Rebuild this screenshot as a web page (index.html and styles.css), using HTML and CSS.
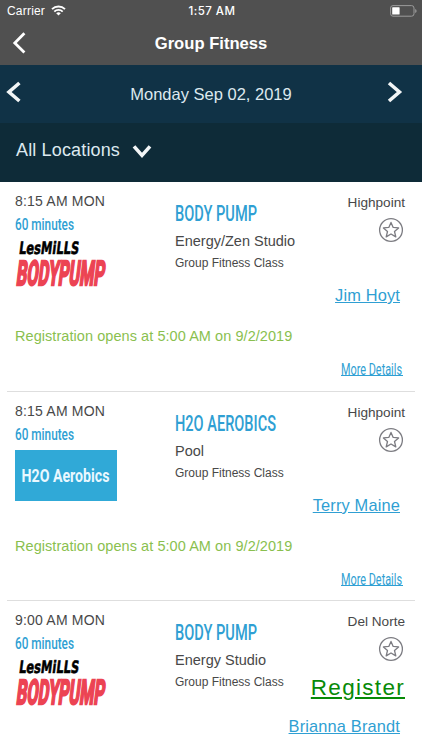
FILE: index.html
```html
<!DOCTYPE html>
<html lang="en">
<head>
    <meta charset="UTF-8">
    <meta name="viewport" content="width=device-width, initial-scale=1.0">
    <title>Group Fitness</title>
    <link rel="stylesheet" href="styles.css">
</head>
<body>
<!-- Shared star icon -->
<svg class="defs" width="0" height="0">
    <symbol id="star" viewBox="0 0 26 26">
        <circle cx="13" cy="13" r="11.4" fill="none" stroke="#7c7c82" stroke-width="1.3"/>
        <path d="M13 5.4l2.2 5 5.4.5-4.1 3.6 1.3 5.4-4.8-2.9-4.8 2.9 1.3-5.4-4.1-3.6 5.4-.5z" fill="none" stroke="#7c7c82" stroke-width="1.3" stroke-linejoin="round"/>
    </symbol>
</svg>

<header class="navbar">
    <div class="status">
        <div class="carrier">
            <span>Carrier</span>
            <svg width="15" height="11" viewBox="0 0 15 11" fill="none" stroke="#fff" stroke-width="1.9">
                <path d="M1 4.1a9.3 9.3 0 0 1 13 0M3.3 6.6a6 6 0 0 1 8.4 0"/>
                <path d="M7.5 10.6L5.2 8.3a3.3 3.3 0 0 1 4.6 0z" fill="#fff" stroke="none"/>
            </svg>
        </div>
        <span class="clock">1:57 AM</span>
        <svg class="battery" width="27" height="12" viewBox="0 0 27 12">
            <rect x=".6" y=".6" width="23.4" height="10.6" rx="2.4" fill="none" stroke="#9b9b9b"/>
            <rect x="2.2" y="2.2" width="7.4" height="7.4" rx=".6" fill="#fff"/>
            <path d="M25.2 4v4q1.4-.6 1.4-2t-1.4-2z" fill="#9b9b9b"/>
        </svg>
    </div>
    <div class="title-row">
        <svg class="back" width="14" height="22" viewBox="0 0 14 22"><path d="M12.4 1.3L2.8 11l9.6 9.6"/></svg>
        <h1>Group Fitness</h1>
    </div>
</header>

<div class="date-bar">
    <svg width="16" height="22" viewBox="0 0 16 22"><path d="M13.4 2L3 11l10.4 9"/></svg>
    <span>Monday Sep 02, 2019</span>
    <svg width="16" height="22" viewBox="0 0 16 22"><path d="M2 2l10.4 9L2 20"/></svg>
</div>

<div class="location-bar">
    <span>All Locations</span>
    <svg width="20" height="15" viewBox="0 0 20 15"><path d="M2 2.4l8 9 8-9"/></svg>
</div>

<main class="classes">
    <section class="class-item">
        <div class="when">
            <p class="time">8:15 AM MON</p>
            <svg class="narrow minutes" width="80" height="20"><text y="15" textLength="59" lengthAdjust="spacingAndGlyphs">60 minutes</text></svg>
            <svg class="logo" viewBox="0 0 102 51">
                <text class="lesmills" transform="translate(3.5 14) skewX(-7)" textLength="60" lengthAdjust="spacingAndGlyphs">LesMiLLS</text>
                <text class="pump" transform="translate(.8 45) skewX(-7)" textLength="88" lengthAdjust="spacingAndGlyphs">BODYPUMP</text>
            </svg>
        </div>
        <div class="what">
            <svg class="narrow name" width="120" height="24"><text y="19" textLength="82" lengthAdjust="spacingAndGlyphs">BODY PUMP</text></svg>
            <p class="room">Energy/Zen Studio</p>
            <p class="category">Group Fitness Class</p>
        </div>
        <div class="who">
            <p class="branch">Highpoint</p>
            <svg class="star"><use href="#star"/></svg>
            <a class="teacher" href="#">Jim Hoyt</a>
        </div>
        <p class="notice">Registration opens at 5:00 AM on 9/2/2019</p>
        <a class="details" href="#"><svg class="narrow" width="62" height="20"><text y="15" textLength="61" lengthAdjust="spacingAndGlyphs">More Details</text></svg></a>
    </section>

    <section class="class-item">
        <div class="when">
            <p class="time">8:15 AM MON</p>
            <svg class="narrow minutes" width="80" height="20"><text y="15" textLength="59" lengthAdjust="spacingAndGlyphs">60 minutes</text></svg>
            <svg class="logo h2o"><text x="6.5" y="31.5" textLength="88" lengthAdjust="spacingAndGlyphs">H2O Aerobics</text></svg>
        </div>
        <div class="what">
            <svg class="narrow name" width="120" height="24"><text y="19" textLength="101" lengthAdjust="spacingAndGlyphs">H2O AEROBICS</text></svg>
            <p class="room">Pool</p>
            <p class="category">Group Fitness Class</p>
        </div>
        <div class="who">
            <p class="branch">Highpoint</p>
            <svg class="star"><use href="#star"/></svg>
            <a class="teacher" href="#">Terry Maine</a>
        </div>
        <p class="notice">Registration opens at 5:00 AM on 9/2/2019</p>
        <a class="details" href="#"><svg class="narrow" width="62" height="20"><text y="15" textLength="61" lengthAdjust="spacingAndGlyphs">More Details</text></svg></a>
    </section>

    <section class="class-item last">
        <div class="when">
            <p class="time">9:00 AM MON</p>
            <svg class="narrow minutes" width="80" height="20"><text y="15" textLength="59" lengthAdjust="spacingAndGlyphs">60 minutes</text></svg>
            <svg class="logo" viewBox="0 0 102 51">
                <text class="lesmills" transform="translate(3.5 14) skewX(-7)" textLength="60" lengthAdjust="spacingAndGlyphs">LesMiLLS</text>
                <text class="pump" transform="translate(.8 45) skewX(-7)" textLength="88" lengthAdjust="spacingAndGlyphs">BODYPUMP</text>
            </svg>
        </div>
        <div class="what">
            <svg class="narrow name" width="120" height="24"><text y="19" textLength="82" lengthAdjust="spacingAndGlyphs">BODY PUMP</text></svg>
            <p class="room">Energy Studio</p>
            <p class="category">Group Fitness Class</p>
        </div>
        <div class="who open">
            <p class="branch">Del Norte</p>
            <svg class="star"><use href="#star"/></svg>
            <a class="register" href="#">Register</a>
            <a class="teacher" href="#">Brianna Brandt</a>
        </div>
    </section>
</main>
</body>
</html>
```
FILE: styles.css
```css
* {
    box-sizing: border-box;
}

body {
    margin: 0;
    font-family: "Liberation Sans", Arial, sans-serif;
    color: #484848;
    background-color: #fff;
}

p, h1 {
    margin: 0;
}

svg {
    display: block;
}

.defs {
    position: absolute;
}

/* Top bar */
.navbar {
    height: 65px;
    color: #fff;
    background-color: #505050;
}

.status {
    display: grid;
    grid-template-columns: 1fr auto 1fr;
    align-items: center;
    height: 22px;
    padding: 0 5px 0 7px;
    font-size: 12px;
}

.carrier {
    display: flex;
    align-items: center;
    gap: 6px;
    letter-spacing: 0.2px;
}

.carrier svg {
    margin-top: -2px;
}

.clock {
    font-family: Inter, sans-serif;
    font-weight: 500;
    font-size: 11.5px;
    letter-spacing: 0.45px;
}

.battery {
    justify-self: end;
    margin-top: -1px;
}

.title-row {
    display: grid;
    grid-template-columns: 50px 1fr 50px;
    align-items: center;
    height: 42px;
}

.title-row h1 {
    padding-top: 1px;
    font-size: 16.6px;
    font-weight: bold;
    text-align: center;
}

.back {
    margin-left: 12px;
    fill: none;
    stroke: #fff;
    stroke-width: 2.8;
}

/* Date and location */
.date-bar {
    display: grid;
    grid-template-columns: 16px 1fr 16px;
    align-items: center;
    height: 58px;
    padding: 0 19px 0 6px;
    font-size: 16.5px;
    text-align: center;
    color: #dde9ef;
    background-color: #103246;
}

.date-bar span {
    padding-left: 13px;
}

.date-bar svg {
    margin-bottom: 5px;
}

.date-bar svg,
.location-bar svg {
    fill: none;
    stroke: #f2f5f6;
    stroke-width: 3.6;
}

.location-bar {
    display: flex;
    align-items: center;
    gap: 12px;
    height: 59px;
    padding: 0 16px 4px;
    font-size: 18px;
    letter-spacing: 0.15px;
    color: #dde9ef;
    background-color: #0e2b38;
}

.location-bar svg {
    margin-top: 2px;
}

/* Class list */
.class-item {
    display: grid;
    grid-template-columns: 160px 1fr 94px;
    grid-template-rows: 144px 26px 1fr;
    height: 209.5px;
    margin: 0 7px;
    padding: 0 10px 0 8px;
    border-bottom: 1px solid #dedede;
}

.class-item.last {
    grid-template-rows: 144px;
    height: 149px;
    border-bottom: none;
}

.when {
    padding-top: 10px;
}

.time {
    font-size: 14px;
    line-height: 18px;
    letter-spacing: 0.2px;
}

.narrow {
    font-family: Roboto, sans-serif;
    font-weight: 500;
    fill: #2f9fd3;
    overflow: visible;
}

.minutes {
    margin-top: 5px;
    font-size: 16px;
}

.logo {
    width: 102px;
    height: 51px;
    margin-top: 5px;
}

.lesmills {
    font: bold 17px "DejaVu Sans", sans-serif;
    fill: #000;
    stroke: #000;
    stroke-width: 0.6px;
}

.pump {
    font: bold 34px Roboto, sans-serif;
    fill: #ec4353;
    stroke: #ec4353;
    stroke-width: 2.4px;
}

.h2o {
    background-color: #30a9d7;
    font: bold 19px Roboto, sans-serif;
    fill: #e9f8ff;
}

.what {
    padding-top: 20px;
}

.name {
    font-size: 21.5px;
}

.room {
    margin-top: 5px;
    font-size: 14.5px;
    line-height: 20px;
    white-space: nowrap;
}

.category {
    margin-top: 3px;
    font-size: 12px;
    line-height: 18px;
    white-space: nowrap;
}

.who {
    display: flex;
    flex-direction: column;
    align-items: flex-end;
    padding-top: 12px;
}

.branch {
    font-size: 13.6px;
    line-height: 17px;
}

.star {
    width: 26px;
    height: 26px;
    margin: 6px 1px 0 0;
}

.teacher {
    margin: 42px 5px 0 0;
    font-size: 16.4px;
    line-height: 20px;
    letter-spacing: 0.15px;
    color: #2f9fd3;
    white-space: nowrap;
}

.register {
    margin-top: 12px;
    font-size: 22.5px;
    line-height: 28px;
    letter-spacing: 1.3px;
    color: #078a07;
}

.open .teacher {
    margin-top: 14px;
}

.notice {
    grid-column: 1 / -1;
    font-size: 14.5px;
    line-height: 20px;
    letter-spacing: 0.06px;
    color: #8abf4f;
}

.details {
    grid-column: 3;
    justify-self: end;
    align-self: start;
    height: 16px;
    margin: 8px 2px 0 0;
    font-size: 16px;
    border-bottom: 1px solid #2f9fd3;
}

.details .narrow {
    font-weight: 400;
}
```
